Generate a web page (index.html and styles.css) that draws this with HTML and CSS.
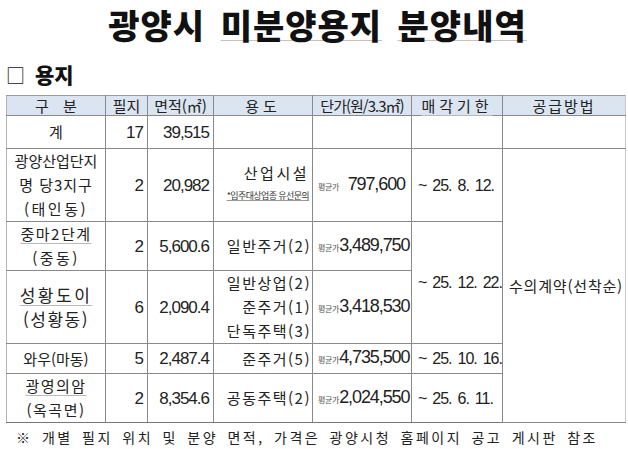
FILE: index.html
```html
<!DOCTYPE html>
<html lang="ko">
<head>
<meta charset="utf-8">
<link rel="stylesheet" href="styles.css">
</head>
<body>
<div class="page">
  <h1 class="title">광양시 <span class="ul">미분양용지</span> <span class="ul">분양내역</span></h1>
  <h2 class="section"><span class="box">□</span> 용지</h2>
  <table class="grid">
    <colgroup>
      <col class="c1"><col class="c2"><col class="c3"><col class="c4"><col class="c5"><col class="c6"><col class="c7">
    </colgroup>
    <thead>
      <tr class="head">
        <th class="sp">구 분</th><th>필지</th><th>면적(㎡)</th><th class="sp2">용도</th><th class="tight">단가(원/3.3㎡)</th><th class="sp2"><span class="ul2">매각기한</span></th><th class="sp1">공급방법</th>
      </tr>
    </thead>
    <tbody>
      <tr class="r-sum">
        <td class="ctr">계</td><td class="num"><span class="n">17</span></td><td class="num"><span class="n">39,515</span></td><td></td><td></td><td></td><td></td>
      </tr>
      <tr class="r-a">
        <td class="ctr name">광양산업단지<br><span class="wide">명 당3지구</span><br><span class="wide2">(태인동)</span></td>
        <td class="num"><span class="n">2</span></td><td class="num"><span class="n">20,982</span></td>
        <td class="use"><span class="wide2">산업시설</span><br><span class="note">*입주대상업종 유선문의</span></td>
        <td class="price"><div class="pr"><span class="avg">평균가</span><span class="pv">797,600</span></div></td>
        <td class="date"><span class="d">~ 25. 8. 12.</span></td>
        <td class="method" rowspan="5">수의계약(선착순)</td>
      </tr>
      <tr class="r-b">
        <td class="ctr name"><span class="ul2 wide1">중마2단계</span><br><span class="wide2">(중동)</span></td>
        <td class="num"><span class="n">2</span></td><td class="num"><span class="n">5,600.6</span></td>
        <td class="use wide1">일반주거(2)</td>
        <td class="price"><div class="pr"><span class="avg">평균가</span><span class="pv">3,489,750</span></div></td>
        <td class="date" rowspan="2"><span class="d">~ 25. 12. 22.</span></td>
      </tr>
      <tr class="r-c">
        <td class="ctr name big"><span class="ul2 wide2">성황도이</span><br><span class="wide1">(성황동)</span></td>
        <td class="num"><span class="n">6</span></td><td class="num"><span class="n">2,090.4</span></td>
        <td class="use wide1">일반상업(2)<br>준주거(1)<br>단독주택(3)</td>
        <td class="price"><div class="pr"><span class="avg">평균가</span><span class="pv">3,418,530</span></div></td>
      </tr>
      <tr class="r-d">
        <td class="ctr name">와우(마동)</td>
        <td class="num"><span class="n">5</span></td><td class="num"><span class="n">2,487.4</span></td>
        <td class="use wide1">준주거(5)</td>
        <td class="price"><div class="pr"><span class="avg">평균가</span><span class="pv">4,735,500</span></div></td>
        <td class="date"><span class="d">~ 25. 10. 16.</span></td>
      </tr>
      <tr class="r-e">
        <td class="ctr name"><span class="ul2 wide1">광영의암</span><br><span class="wide1">(옥곡면)</span></td>
        <td class="num"><span class="n">2</span></td><td class="num"><span class="n">8,354.6</span></td>
        <td class="use wide1">공동주택(2)</td>
        <td class="price"><div class="pr"><span class="avg">평균가</span><span class="pv">2,024,550</span></div></td>
        <td class="date"><span class="d">~ 25. 6. 11.</span></td>
      </tr>
    </tbody>
  </table>
  <p class="foot">※ 개별 필지 위치 및 분양 면적, 가격은 광양시청 홈페이지 공고 게시판 참조</p>
</div>
</body>
</html>
```

FILE: styles.css
```css
html, body {
  margin: 0;
  padding: 0;
  background: #fff;
}
body {
  font-family: "Noto Sans CJK KR", "Noto Sans", sans-serif;
  color: #222;
}
.page {
  width: 628px;
  height: 449px;
  overflow: hidden;
  padding: 0 3px 0 6px;
  box-sizing: border-box;
}
.title {
  margin: 0 0 2px 0;
  text-align: center;
  font-size: 34px;
  line-height: 50px;
  font-weight: 900;
  color: #111;
  letter-spacing: 1px;
  word-spacing: 5px;
  padding-left: 4px;
}
.title .ul {
  text-decoration: underline;
  text-decoration-color: #d3bcbc;
  text-decoration-thickness: 1px;
  text-underline-offset: 1px;
}
.section {
  margin: 0;
  height: 43px;
  font-size: 21px;
  line-height: 44px;
  font-weight: 900;
  color: #111;
  padding-left: 0;
}
.section .box {
  font-weight: 400;
  font-size: 19px;
  margin-right: 4px;
}
.grid {
  border-collapse: collapse;
  table-layout: fixed;
  width: 619px;
  font-size: 15px;
}
.grid th, .grid td {
  border: 1px solid #8a8a8a;
  padding: 0;
  vertical-align: middle;
  line-height: 24px;
  white-space: nowrap;
}
.grid tr > :first-child { border-left-color: #b5b5b5; }
.grid tr > :last-child { border-right-color: #c8c8c8; }
.c1 { width: 99px; }
.c2 { width: 42px; }
.c3 { width: 66px; }
.c4 { width: 99px; }
.c5 { width: 99px; }
.c6 { width: 91px; }
.c7 { width: 123px; }
.head th {
  background: #dbe5f1;
  font-weight: 400;
  height: 19px;
  line-height: 19px;
  font-size: 15px;
  color: #222;
  border-top-color: #9a9a9a;
}
.head .sp { word-spacing: 10px; }
.head .sp2 { letter-spacing: 4px; }
.head .sp1 { letter-spacing: 2px; }
.head .tight { letter-spacing: -1px; }
.r-sum td { height: 32px; }
.r-a td { height: 71px; }
.r-b td { height: 45px; }
.r-c td { height: 71px; }
.r-d td { height: 29px; }
.r-e td { height: 46px; }
.ctr { text-align: center; }
.num {
  text-align: right;
  padding-right: 4px !important;
}
.n {
  font-family: "Liberation Sans", Arial, sans-serif;
  font-size: 17px;
  letter-spacing: -1px;
  color: #222;
}
.name { line-height: 24px; }
.big { font-size: 17px; }
.wide { letter-spacing: 1px; }
.wide1 { letter-spacing: 1.5px; }
.wide2 { letter-spacing: 2.5px; }
.use {
  text-align: right;
  padding-right: 3px !important;
}
.use.wide1 { padding-right: 1px !important; }
.note {
  display: inline-block;
  font-size: 9px;
  line-height: 13px;
  letter-spacing: -0.6px;
  text-decoration: underline;
  text-decoration-color: #999;
  color: #333;
  vertical-align: top;
  margin-top: 4px;
}
.price {
  padding: 0 6px 0 5px !important;
}
.pr {
  display: flex;
  justify-content: space-between;
  align-items: baseline;
}
.avg {
  font-size: 8px;
  color: #555;
  letter-spacing: -0.3px;
}
.pv {
  font-family: "Liberation Sans", Arial, sans-serif;
  font-size: 18px;
  letter-spacing: -1.1px;
}
.date {
  padding-left: 6px !important;
}
.d {
  font-family: "Liberation Sans", Arial, sans-serif;
  font-size: 16px;
  letter-spacing: -1px;
  word-spacing: 2.5px;
}
.method {
  text-align: center;
  letter-spacing: 0.8px;
  font-size: 15px;
  padding-left: 4px !important;
}
.ul2 {
  text-decoration: underline;
  text-decoration-color: #b9b9b9;
  text-decoration-thickness: 1px;
  text-underline-offset: 3px;
}
.r-e td { border-bottom-color: #777; }
.foot {
  margin: 4px 0 0 10px;
  font-size: 14px;
  line-height: 20px;
  letter-spacing: 2.5px;
  word-spacing: 3px;
  color: #222;
  white-space: nowrap;
}
```
